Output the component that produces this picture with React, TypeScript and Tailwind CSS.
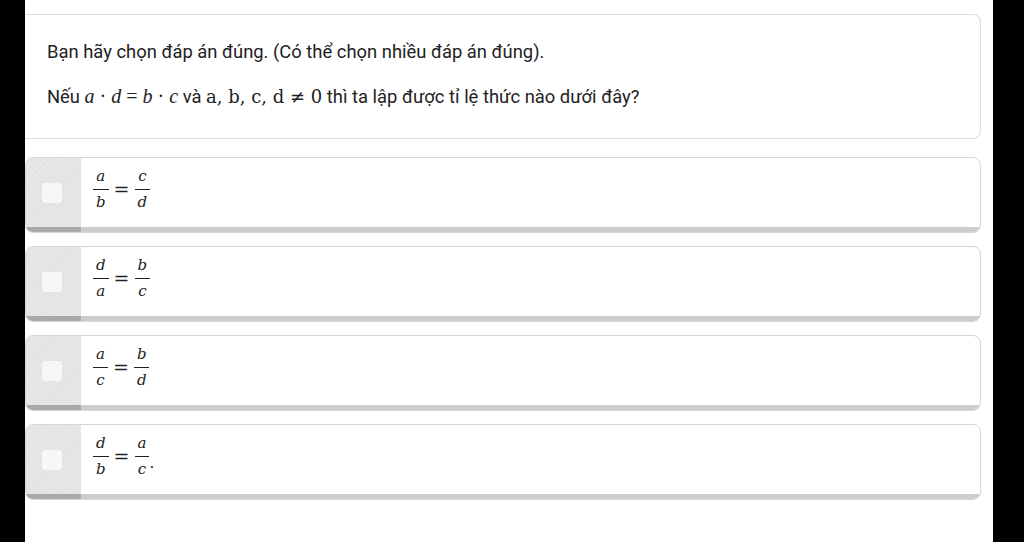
import React from "react";

const serif = "font-['DejaVu_Serif','Liberation_Serif',serif]";
const italicSerif = "font-['Liberation_Serif','DejaVu_Serif',serif]";

function Frac({ top, bottom }: { top: string; bottom: string }) {
    return (
        <span className={`inline-flex flex-col items-center ${serif} italic text-[15px] leading-none`}>
            <span className="px-[3px] pb-[5px]">{top}</span>
            <span className="h-px w-full bg-[#222]" />
            <span className="px-[3px] pt-[5px]">{bottom}</span>
        </span>
    );
}

function Option({ left, right, dot }: { left: [string, string]; right: [string, string]; dot?: boolean }) {
    return (
        <div className="flex h-[76px] rounded-lg border border-[#d6d6d6] overflow-hidden bg-white">
            <div className="w-[55px] flex items-center justify-center border-b-[5px] border-[#a9a9a9] bg-[repeating-linear-gradient(135deg,#e1e3e4_0px,#e1e3e4_2px,#e6e7e8_2px,#e6e7e8_4px)]">
                <div className="w-[20px] h-[20px] rounded-[3px] bg-[#f6f7f7] ml-[-3px]" />
            </div>
            <div className="flex-1 flex items-center pl-[12px] pb-[6px] border-b-[5px] border-[#cdcdcd] text-[#222]">
                <Frac top={left[0]} bottom={left[1]} />
                <span className={`${serif} text-[19px] mx-[5px] leading-none`}>=</span>
                <Frac top={right[0]} bottom={right[1]} />
                {dot && <span className={`${serif} text-[15px] self-center mt-[14px]`}>.</span>}
            </div>
        </div>
    );
}

export default function App() {
    return (
        <div className="w-[1024px] h-[542px] bg-black flex font-['Roboto',sans-serif]">
            <div className="w-[25px]" />
            <div className="w-[968px] bg-white pt-[14px] pr-[12px]">
                <div className="border border-l-0 border-[#dcdcdc] rounded-r-lg h-[125px] pl-[22px] pt-[25px] text-[18.4px] text-[#222]">
                    <p className="leading-[24px]">Bạn hãy chọn đáp án đúng. (Có thể chọn nhiều đáp án đúng).</p>
                    <p className="leading-[24px] mt-[20px]">
                        Nếu{" "}
                        <span className={`${italicSerif} text-[20px]`}>
                            <i>a</i> · <i>d</i> = <i>b</i> · <i>c</i>
                        </span>{" "}
                        và{" "}
                        <span className={`${serif} text-[18px]`}>a, b, c, d ≠ 0</span>{" "}
                        thì ta lập được tỉ lệ thức nào dưới đây?
                    </p>
                </div>
                <div className="flex flex-col gap-[13px] mt-[18px]">
                    <Option left={["a", "b"]} right={["c", "d"]} />
                    <Option left={["d", "a"]} right={["b", "c"]} />
                    <Option left={["a", "c"]} right={["b", "d"]} />
                    <Option left={["d", "b"]} right={["a", "c"]} dot />
                </div>
            </div>
        </div>
    );
}
